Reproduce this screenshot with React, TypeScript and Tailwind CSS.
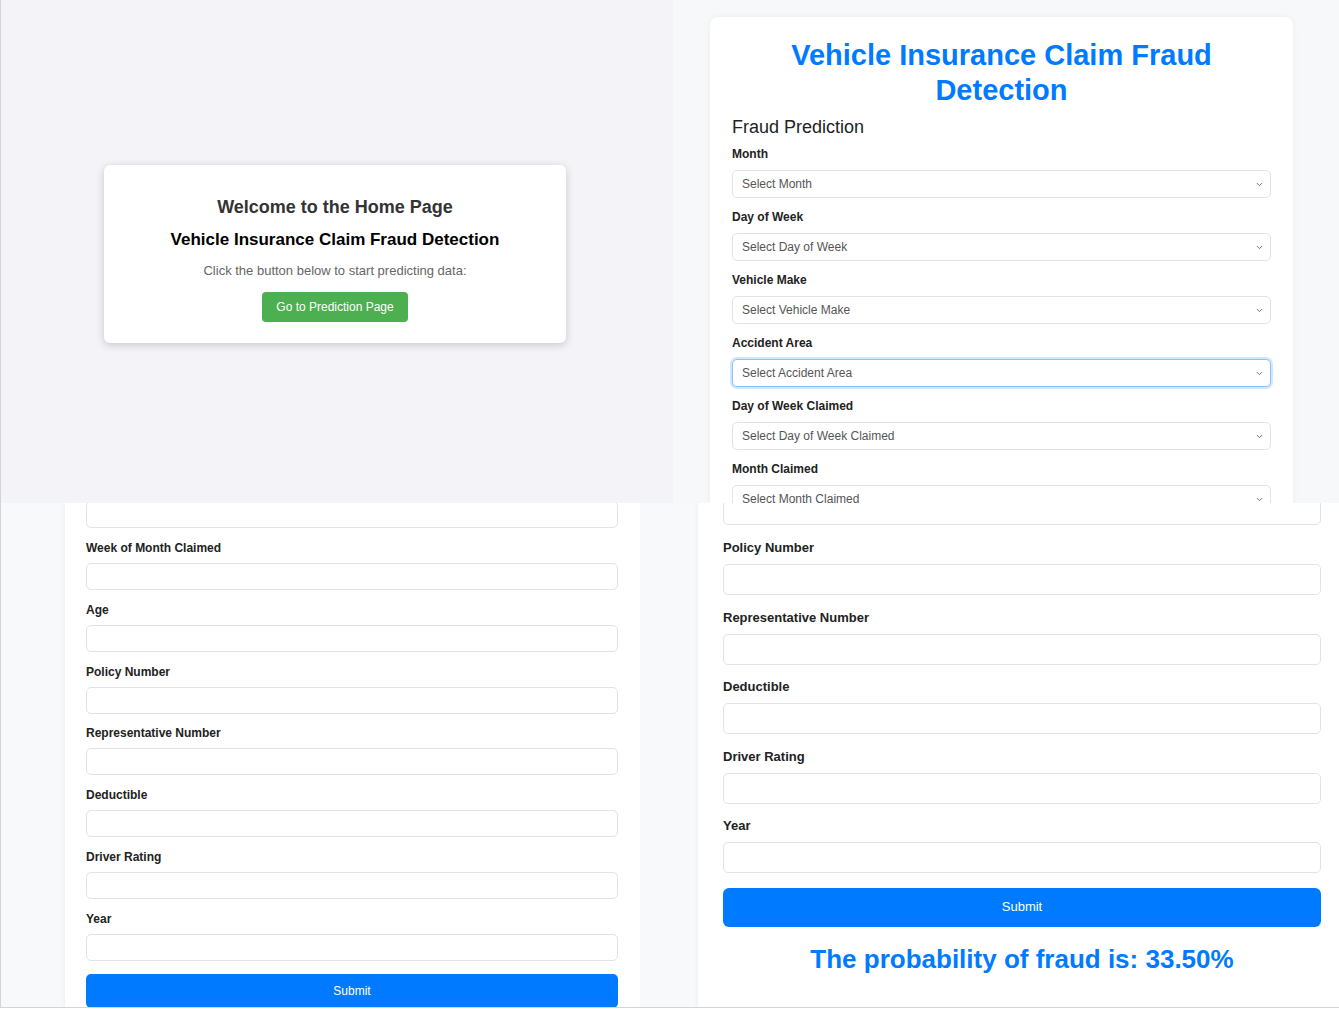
import { ChevronDown } from "lucide-react";

const font = { fontFamily: '"Liberation Sans", Arial, sans-serif' };

const selectFields = [
  { label: "Month", placeholder: "Select Month" },
  { label: "Day of Week", placeholder: "Select Day of Week" },
  { label: "Vehicle Make", placeholder: "Select Vehicle Make" },
  { label: "Accident Area", placeholder: "Select Accident Area", focused: true },
  { label: "Day of Week Claimed", placeholder: "Select Day of Week Claimed" },
  { label: "Month Claimed", placeholder: "Select Month Claimed" },
];

const smallFields = [
  "Week of Month Claimed",
  "Age",
  "Policy Number",
  "Representative Number",
  "Deductible",
  "Driver Rating",
  "Year",
];

const largeFields = ["Policy Number", "Representative Number", "Deductible", "Driver Rating", "Year"];

const HomePanel = () => (
  <div className="w-[673px] h-full bg-[#f4f4f8] border-l border-[#d4d4d8] flex items-center justify-center pr-[4px] pt-[4px]">
    <div className="w-[462px] bg-white rounded-[6px] shadow-[0_2px_8px_rgba(0,0,0,0.18)] px-5 pt-5 pb-[21px] flex flex-col items-center">
      <h2 className="mt-[11px] text-[18px] leading-[22px] font-bold text-[#333]">Welcome to the Home Page</h2>
      <h3 className="mt-[11px] text-[17px] leading-[22px] font-bold text-black">
        Vehicle Insurance Claim Fraud Detection
      </h3>
      <p className="mt-[12px] text-[13px] leading-[16px] text-[#666]">Click the button below to start predicting data:</p>
      <button className="mt-[13px] h-[30px] px-[14px] rounded-[4px] bg-[#4caf50] text-white text-[12px]">
        Go to Prediction Page
      </button>
    </div>
  </div>
);

const SelectBox = ({ placeholder, focused }: { placeholder: string; focused?: boolean }) => (
  <div
    className={`h-[28px] rounded-[5px] border bg-white flex items-center justify-between pl-[9px] pr-[6px] ${
      focused ? "border-[#8ec0f7] shadow-[0_0_0_2px_rgba(0,123,255,0.18)]" : "border-[#e3e3e6]"
    }`}
  >
    <span className="text-[12px] text-[#555]">{placeholder}</span>
    <ChevronDown className="w-[9px] h-[9px] text-[#666]" strokeWidth={2.5} />
  </div>
);

const PredictionTop = () => (
  <div className="flex-1 h-full bg-[#f7f8fa] overflow-hidden pt-[17px] pl-[37px]">
    <div className="w-[583px] bg-white rounded-t-[8px] shadow-[0_0_6px_rgba(0,0,0,0.05)] px-[22px] pt-[21px] pb-6">
      <h1 className="text-center text-[29px] leading-[35px] font-bold text-[#007bff] px-12">
        Vehicle Insurance Claim Fraud Detection
      </h1>
      <h2 className="mt-[8px] text-[18px] leading-[22px] text-[#222]">Fraud Prediction</h2>
      <div className="mt-[9px] flex flex-col">
        {selectFields.map((f) => (
          <div key={f.label} className="mb-[12px]">
            <div className="text-[12px] leading-[14px] font-bold text-[#222] mb-[9px]">{f.label}</div>
            <SelectBox placeholder={f.placeholder} focused={f.focused} />
          </div>
        ))}
      </div>
    </div>
  </div>
);

const FormBottomLeft = () => (
  <div className="w-[640px] h-full bg-[#f8f9fa] border-l border-[#d4d4d8] overflow-hidden pl-[64px]">
    <div className="h-full flex flex-col bg-white shadow-[0_0_6px_rgba(0,0,0,0.06)] pl-[21px] pr-[22px]">
      <div className="mt-[-2px] h-[27px] flex-none rounded-[5px] border border-[#e3e3e6]" />
      <div className="mt-[13px] flex flex-col">
        {smallFields.map((label) => (
          <div key={label} className="mb-[12.8px]">
            <div className="text-[12px] leading-[14px] font-bold text-[#222] mb-[8px]">{label}</div>
            <div className="h-[27px] rounded-[5px] border border-[#e3e3e6] bg-white" />
          </div>
        ))}
        <button className="h-[34px] flex-none rounded-[5px] bg-[#007bff] text-white text-[12px]">Submit</button>
      </div>
    </div>
  </div>
);

const FormBottomRight = () => (
  <div className="flex-1 h-full bg-[#f8f9fa] overflow-hidden pl-[58px]">
    <div className="w-[648px] h-full flex flex-col bg-white shadow-[0_0_6px_rgba(0,0,0,0.06)] px-[25px]">
      <div className="mt-[-9px] h-[31px] flex-none rounded-[5px] border border-[#e3e3e6]" />
      <div className="mt-[15px] flex flex-col">
        {largeFields.map((label) => (
          <div key={label} className="mb-[14.5px]">
            <div className="text-[13px] leading-[16px] font-bold text-[#222] mb-[8px]">{label}</div>
            <div className="h-[31px] rounded-[5px] border border-[#e3e3e6] bg-white" />
          </div>
        ))}
        <button className="h-[39px] flex-none rounded-[6px] bg-[#007bff] text-white text-[13px]">Submit</button>
        <p className="mt-[17px] text-center text-[26px] leading-[30px] font-bold text-[#007bff]">
          The probability of fraud is: 33.50%
        </p>
      </div>
    </div>
  </div>
);

export default function App() {
  return (
    <div className="w-[1339px] h-[1009px] bg-white overflow-hidden" style={font}>
      <div className="h-[503px] flex">
        <HomePanel />
        <PredictionTop />
      </div>
      <div className="h-[505px] flex border-b border-[#d4d4d8]">
        <FormBottomLeft />
        <FormBottomRight />
      </div>
    </div>
  );
}
